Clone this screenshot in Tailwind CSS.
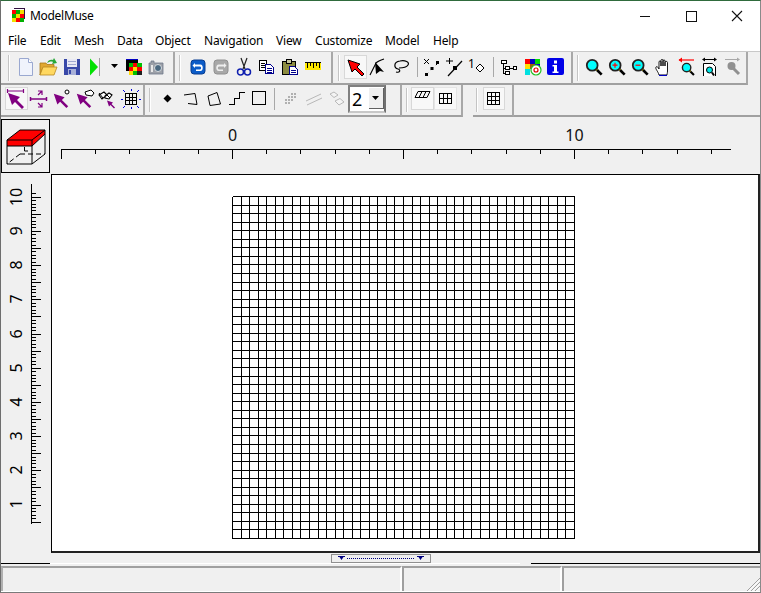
<!DOCTYPE html>
<html lang="en">
<head>
  <meta charset="UTF-8" />
  <title>ModelMuse</title>
  <script src="https://cdn.jsdelivr.net/npm/@tailwindcss/browser@4"></script>
</head>
<body class="bg-[#f0f0f0] overflow-hidden">

  <!-- shared icon parts -->
  <svg class="hidden">
    <symbol id="arrow" viewBox="0 0 20 20"><path d="M2 3 L14 7 L11 10 L18 17 L16 19 L9 12 L6 15 Z" fill="currentColor"/></symbol>
    <symbol id="lens" viewBox="0 0 20 20">
      <line x1="12" y1="12" x2="18.5" y2="18.5" stroke="#000" stroke-width="3"/>
      <line x1="11.5" y1="11.5" x2="13.5" y2="13.5" stroke="#e0d020" stroke-width="2"/>
      <circle cx="8" cy="8" r="6" fill="#00ffff" stroke="#222" stroke-width="2"/>
    </symbol>
  </svg>

  <div class="w-[761px] h-[593px] flex flex-col border-t border-t-[#2f6b3c] border-l border-l-[#6e6e6e] border-r border-r-[#8a8a8a] border-b border-b-[#7a7a7a] font-['Noto_Sans',sans-serif] text-black">

    <!-- Title bar -->
    <div class="h-[30px] bg-white flex items-center shrink-0">
      <svg class="ml-[9px] mt-[-1px]" width="16" height="15" viewBox="0 0 15 15" shape-rendering="crispEdges">
        <rect x="1" y="2" width="4" height="4" fill="#ff0000"/><rect x="5" y="2" width="4" height="4" fill="#00b000"/><rect x="9" y="2" width="4" height="4" fill="#f0e000"/>
        <rect x="1" y="6" width="4" height="4" fill="#00b000"/><rect x="5" y="6" width="4" height="4" fill="#f0e000"/><rect x="9" y="6" width="4" height="4" fill="#ff0000"/>
        <rect x="1" y="10" width="4" height="4" fill="#f0e000"/><rect x="5" y="10" width="4" height="4" fill="#ff0000"/><rect x="9" y="10" width="4" height="4" fill="#00b000"/>
        <path d="M3 0h11v11h-1V1H3z" fill="#301040"/>
      </svg>
      <span class="ml-[4px] text-[12px] leading-none tracking-[-0.3px]">ModelMuse</span>
      <div class="ml-auto flex h-full items-center">
        <svg width="46" height="30" shape-rendering="crispEdges"><rect x="18" y="15" width="10" height="1" fill="#111"/></svg>
        <svg width="46" height="30" shape-rendering="crispEdges"><rect x="18.5" y="10.5" width="10" height="10" fill="none" stroke="#111"/></svg>
        <svg width="46" height="30"><path d="M18 10 L28 20 M28 10 L18 20" stroke="#111" stroke-width="1.1"/></svg>
      </div>
    </div>

    <!-- Menu bar -->
    <div class="h-[20px] bg-white flex items-center text-[12px] leading-none shrink-0 pl-[7px] tracking-[-0.2px]">
      <span class="w-[32px]">File</span>
      <span class="w-[34px]">Edit</span>
      <span class="w-[43px]">Mesh</span>
      <span class="w-[38px]">Data</span>
      <span class="w-[49px]">Object</span>
      <span class="w-[72px]">Navigation</span>
      <span class="w-[39px]">View</span>
      <span class="w-[70px]">Customize</span>
      <span class="w-[48px]">Model</span>
      <span>Help</span>
    </div>

    <!-- Toolbar row 1 -->
    <div class="h-[34px] flex shrink-0 border-t border-t-[#c8c8c8]">
      <div class="w-[174px] flex items-center border-b-2 border-b-[#a0a0a0] border-r-2 border-r-[#a8a8a8] relative pl-[13px] pb-[2px]">
        <div class="absolute left-[7px] top-[3px] bottom-[2px] w-[2px] bg-[#c4c4c4] border-r border-white"></div>
        <div class="w-[23px] flex justify-center">
          <svg width="20" height="20" viewBox="0 0 20 20"><path d="M3.5 1.5h9l4 4v13h-13z" fill="#f0f3fc" stroke="#9aa8d0"/><path d="M12.5 1.5v4h4" fill="#ffffff" stroke="#9aa8d0"/></svg>
        </div>
        <div class="w-[23px] flex justify-center">
          <svg width="20" height="20" viewBox="0 0 20 20"><path d="M1 6h6l1 1.500h7v3H4L1 18z" fill="#e0a830" stroke="#a87818" stroke-width=".8"/><path d="M1 18l3-8h14l-3 8z" fill="#ffd860" stroke="#b88820" stroke-width=".8"/><path d="M8 6c1-3 4-4 6-3l1-2 3 5-5 1 1-2c-2-1-4 0-6 1z" fill="#28a838"/></svg>
        </div>
        <div class="w-[24px] flex justify-center">
          <svg width="20" height="20" viewBox="0 0 20 20" shape-rendering="crispEdges"><rect x="2" y="2" width="16" height="16" fill="#3848a8"/><rect x="5" y="2" width="10" height="8" fill="#e8e8f4"/><rect x="6" y="4" width="8" height="1" fill="#a0a8d0"/><rect x="6" y="7" width="8" height="1" fill="#a0a8d0"/><rect x="6" y="12" width="8" height="6" fill="#a8b0d8"/><rect x="7" y="13" width="2" height="4" fill="#3848a8"/></svg>
        </div>
        <div class="w-[22px] flex justify-center">
          <svg width="20" height="20" viewBox="0 0 20 20"><path d="M5 1.500 L13 10 L5 18.500 Z" fill="#00e000"/><rect x="14" y="1" width="1" height="18" fill="#a0a0a0"/></svg>
        </div>
        <div class="w-[17px] flex justify-center">
          <svg width="9" height="5"><path d="M1 0h7L4.500 4z" fill="#000"/></svg>
        </div>
        <div class="w-[21px] flex justify-center">
          <svg width="18" height="18" viewBox="0 0 18 18" shape-rendering="crispEdges"><rect x="1" y="1" width="12" height="4" fill="#000"/><rect x="1" y="1" width="12" height="1" fill="#0000c0"/><rect x="1" y="5" width="3" height="8" fill="#000"/><rect x="4" y="5" width="4" height="4" fill="#00c000"/><rect x="8" y="5" width="4" height="4" fill="#ff0000"/><rect x="12" y="5" width="5" height="4" fill="#00c000"/><rect x="4" y="9" width="4" height="4" fill="#ff0000"/><rect x="8" y="9" width="4" height="4" fill="#ffe000"/><rect x="12" y="9" width="5" height="4" fill="#ff0000"/><rect x="4" y="13" width="4" height="4" fill="#ffe000"/><rect x="8" y="13" width="4" height="4" fill="#00c000"/><rect x="12" y="13" width="5" height="4" fill="#202020"/></svg>
        </div>
        <div class="w-[24px] flex justify-center">
          <svg width="18" height="18" viewBox="0 0 18 18"><path d="M2 5h2V3h3v2h9v11H2z" fill="#9ca0a8" stroke="#70788a" stroke-width=".8"/><circle cx="11" cy="10" r="3.500" fill="#4a6880" stroke="#d8dce0"/><rect x="4" y="7" width="2" height="7" fill="#e8e8e8"/></svg>
        </div>
      </div>

      <div class="w-[158px] flex items-center border-b-2 border-b-[#a0a0a0] border-r-2 border-r-[#a8a8a8] relative pl-[11px] pb-[2px]">
        <div class="absolute left-[4px] top-[3px] bottom-[2px] w-[2px] bg-[#c4c4c4] border-r border-white"></div>
        <div class="w-[23px] flex justify-center">
          <svg width="18" height="18" viewBox="0 0 18 18"><rect x="2" y="2" width="14" height="14" rx="3" fill="#0c5cc8" stroke="#083c90"/><path d="M6 5 L3.500 7.500 L6 10 V8.500 H11 C12.500 8.500 12.500 11.500 11 11.500 H7 V13 H11.500 C14.500 13 14.500 6.500 11.500 6.500 H6 Z" fill="#fff"/></svg>
        </div>
        <div class="w-[23px] flex justify-center">
          <svg width="18" height="18" viewBox="0 0 18 18"><rect x="2" y="2" width="14" height="14" rx="3" fill="#a8a8a8" stroke="#909090"/><path d="M12 5 L14.500 7.500 L12 10 V8.500 H7 C5.500 8.500 5.500 11.500 7 11.500 H11 V13 H6.500 C3.500 13 3.500 6.500 6.500 6.500 H12 Z" fill="#eee"/></svg>
        </div>
        <div class="w-[23px] flex justify-center">
          <svg width="20" height="20" viewBox="0 0 20 20"><path d="M7 1 L11 12 M13 1 L9 12" stroke="#222" stroke-width="1.200"/><circle cx="6.500" cy="15" r="3" fill="none" stroke="#1020b0" stroke-width="1.500"/><circle cx="13.500" cy="15" r="3" fill="none" stroke="#1020b0" stroke-width="1.500"/></svg>
        </div>
        <div class="w-[23px] flex justify-center">
          <svg width="18" height="18" viewBox="0 0 18 18" shape-rendering="crispEdges"><path d="M1.500 2.500h7v10h-7z" fill="#fff" stroke="#000"/><path d="M3 5h4M3 7h4M3 9h4" stroke="#000"/><path d="M7.500 6.500h5l3 3v6h-8z" fill="#fff" stroke="#00008b"/><path d="M9 10h5M9 12h5M9 14h5" stroke="#00008b"/></svg>
        </div>
        <div class="w-[23px] flex justify-center">
          <svg width="18" height="18" viewBox="0 0 18 18" shape-rendering="crispEdges"><rect x="1" y="3" width="13" height="13" fill="#8c8c40" stroke="#000"/><rect x="5" y="1" width="5" height="4" fill="#c8c8a0" stroke="#000"/><path d="M8.500 8.500h5l3 3v5h-8z" fill="#fff" stroke="#00008b"/><path d="M10 12h5M10 14h5" stroke="#00008b"/></svg>
        </div>
        <div class="w-[23px] flex justify-center">
          <svg width="18" height="9" viewBox="0 0 18 9" shape-rendering="crispEdges"><rect x="1" y="0" width="16" height="8" fill="#ffe800"/><path d="M3.500 0v6M6.500 0v4M9.500 0v6M12.500 0v4M15.500 0v6" stroke="#000"/><rect x="1" y="0" width="16" height="1" fill="#000"/></svg>
        </div>
      </div>

      <div class="w-[240px] flex items-center border-b-2 border-b-[#a0a0a0] border-r-2 border-r-[#a8a8a8] relative pl-[11px] pb-[2px]">
        <div class="absolute left-[5px] top-[3px] bottom-[2px] w-[2px] bg-[#c4c4c4] border-r border-white"></div>
        <div class="w-[23px] h-[24px] flex justify-center items-center bg-[#f8f8f8] border border-[#d8d8d8]">
          <svg width="20" height="20" viewBox="0 0 20 20"><path d="M2 3 L14 7 L11 10 L18 17 L16 19 L9 12 L6 15 Z" fill="#ff0000" stroke="#000"/></svg>
        </div>
        <div class="w-[23px] flex justify-center">
          <svg width="20" height="20" viewBox="0 0 20 20"><path d="M1 18 L7 6 C9 4 12 3 15 2" fill="none" stroke="#000" stroke-width="1.100"/><path d="M6 5 L15 15 L11 14 L7 17 Z" fill="#000"/></svg>
        </div>
        <div class="w-[23px] flex justify-center">
          <svg width="20" height="20" viewBox="0 0 20 20"><path d="M4 15 C8 16 9 13 6 12 C2 11 1 5 8 4 C13 3 18 5 16 8 C14 11 10 11 7 11" fill="none" stroke="#000" stroke-width="1.200"/></svg>
        </div>
        <div class="w-[3px] h-[20px] border-l border-l-[#a8a8a8] ml-[4px]"></div>
        <div class="w-[23px] flex justify-center">
          <svg width="20" height="20" viewBox="0 0 20 20"><path d="M2 2l5 5M7 2l-5 5" stroke="#000"/><path d="M4 18 L17 5" stroke="#000" stroke-dasharray="3 4"/><rect x="8.500" y="10" width="3" height="3" fill="#000"/><rect x="3" y="16" width="3" height="3" fill="#000"/><rect x="14" y="4" width="3" height="3" fill="#000"/></svg>
        </div>
        <div class="w-[23px] flex justify-center">
          <svg width="20" height="20" viewBox="0 0 20 20"><path d="M1 4h7M4.500 1v6" stroke="#000"/><path d="M3 19 L17 4" stroke="#000" stroke-width="1.200"/><rect x="8" y="9" width="4" height="4" fill="#000"/></svg>
        </div>
        <div class="w-[23px] flex justify-center relative h-[20px]">
          <span class="text-[12px] leading-none absolute left-[2px] top-[1px]">1</span>
          <svg class="absolute left-[9px] top-[6px]" width="10" height="10"><path d="M5 1 L9 5 L5 9 L1 5 Z" fill="#fff" stroke="#000"/></svg>
        </div>
        <div class="w-[4px] h-[20px] border-l border-l-[#a8a8a8] ml-[4px]"></div>
        <div class="w-[23px] flex justify-center">
          <svg width="18" height="18" viewBox="0 0 18 18" shape-rendering="crispEdges"><path d="M1.500 2.500h5v3h-5zM5.500 8.500h4v3h-4zM5.500 13.500h4v3h-4zM13.500 8.500h3v3h-3z" fill="#fff" stroke="#000"/><path d="M3.500 5v10h2M3.500 10h2M9.500 10h4" stroke="#000" fill="none"/></svg>
        </div>
        <div class="w-[25px] flex justify-center">
          <svg width="18" height="18" viewBox="0 0 18 18"><g shape-rendering="crispEdges"><rect x="1" y="1" width="5" height="5" fill="#ff0000"/><rect x="6" y="1" width="5" height="5" fill="#0000c0"/><rect x="11" y="1" width="5" height="5" fill="#00e000"/><rect x="1" y="6" width="5" height="5" fill="#ffe000"/><rect x="6" y="6" width="5" height="5" fill="#a06000"/><rect x="11" y="6" width="5" height="5" fill="#0000c0"/><rect x="1" y="11" width="5" height="6" fill="#00e0e0"/></g><circle cx="12" cy="12" r="5" fill="#fff" stroke="#20c020" stroke-width="1.200"/><circle cx="12" cy="12" r="2" fill="none" stroke="#e00000" stroke-width="1.200"/></svg>
        </div>
        <div class="w-[21px] flex justify-center">
          <svg width="17" height="17" viewBox="0 0 17 17"><rect width="17" height="17" rx="2" fill="#0000e8"/><rect x="7" y="2.500" width="3" height="3" fill="#fff"/><path d="M5.500 7h4.500v6.500h1.500V15h-6v-1.500H7V8.500H5.500z" fill="#fff"/></svg>
        </div>
      </div>

      <div class="w-[175px] flex items-center border-b-2 border-b-[#a0a0a0] border-r-2 border-r-[#a8a8a8] relative pl-[9px] pb-[2px]">
        <div class="absolute left-[4px] top-[3px] bottom-[2px] w-[2px] bg-[#c4c4c4] border-r border-white"></div>
        <div class="w-[23px] flex justify-center"><svg width="18" height="18"><use href="#lens"/></svg></div>
        <div class="w-[23px] flex justify-center">
          <svg width="18" height="18" viewBox="0 0 18 18"><use href="#lens" width="18" height="18"/><path d="M4.500 7.200h5M7 4.700v5" stroke="#ff0000" stroke-width="1.200"/></svg>
        </div>
        <div class="w-[23px] flex justify-center">
          <svg width="18" height="18" viewBox="0 0 18 18"><use href="#lens" width="18" height="18"/><path d="M4.500 7.200h5" stroke="#ff0000" stroke-width="1.200"/></svg>
        </div>
        <div class="w-[24px] flex justify-center">
          <svg width="16" height="18" viewBox="0 0 16 18"><path d="M4 17 C3 13 0 11 1 9 C2 8 3 9 4 11 V4 C4 2.500 6 2.500 6 4 V8 V2.500 C6 1 8 1 8 2.500 V8 V3 C8 1.500 10 1.500 10 3 V8 V4.500 C10 3 12.500 3 12.500 4.500 V13 C12.500 15 12 16 12 17 Z" fill="#fff" stroke="#000" stroke-width=".9"/><path d="M4 17.500h8" stroke="#0000c0" stroke-width="1.200"/></svg>
        </div>
        <div class="w-[23px] flex justify-center">
          <svg width="20" height="20" viewBox="0 0 20 20"><path d="M2 3h15" stroke="#ff0000" stroke-width="1.200"/><path d="M5 .5L1.500 3 5 5.500z" fill="#ff0000"/><use href="#lens" x="4" y="5" width="14" height="14"/></svg>
        </div>
        <div class="w-[23px] flex justify-center">
          <svg width="20" height="20" viewBox="0 0 20 20"><path d="M3 2.500h13" stroke="#000"/><path d="M5 .5L2 2.500 5 4.500zM14 .5L17 2.500 14 4.500z" fill="#000"/><path d="M3.500 19V6.500h9l3 3V19" fill="#fff" stroke="#000"/><circle cx="9.500" cy="13" r="3" fill="#00e8e8" stroke="#000"/><path d="M12 15.500l2 3" stroke="#000" stroke-width="2"/></svg>
        </div>
        <div class="w-[23px] flex justify-center">
          <svg width="20" height="20" viewBox="0 0 20 20"><path d="M2 2.500h14" stroke="#a8a8a8"/><path d="M14 .5L17 2.500 14 4.500z" fill="#a8a8a8"/><circle cx="8.500" cy="9" r="4" fill="#909090"/><path d="M10 11l6 6" stroke="#909090" stroke-width="3"/></svg>
        </div>
      </div>
    </div>

    <!-- Toolbar row 2 -->
    <div class="h-[32px] flex shrink-0">
      <div class="w-[144px] flex items-center border-b-2 border-b-[#a0a0a0] border-r-2 border-r-[#a8a8a8] pl-[4px] pb-[3px]">
        <div class="w-[23px] h-[23px] flex justify-center items-center bg-[#f8f8f8] border border-[#d8d8d8]">
          <svg width="20" height="20" viewBox="0 0 20 20" class="text-[#800080]"><use href="#arrow" y="1" width="20" height="20"/><path d="M1 2h17M1.500 0v4M17.500 0v4" stroke="currentColor" stroke-width="1.200"/></svg>
        </div>
        <div class="w-[23px] flex justify-center">
          <svg width="20" height="20" viewBox="0 0 20 20" fill="none" stroke="#800080" stroke-width="1.200"><path d="M1 10h17M1.500 8v4M17.500 8v4" stroke-width="1.500"/><path d="M9 2h4v4M13 2L9 6M9 18h4v-4M13 18L9 14"/></svg>
        </div>
        <div class="w-[23px] flex justify-center">
          <svg width="20" height="20" viewBox="0 0 20 20" class="text-[#800080]"><use href="#arrow" y="2" width="18" height="18"/><circle cx="15" cy="3" r="2" fill="#fff" stroke="#000"/></svg>
        </div>
        <div class="w-[23px] flex justify-center">
          <svg width="20" height="20" viewBox="0 0 20 20" class="text-[#800080]"><use href="#arrow" y="2" width="18" height="18"/><path d="M10 3l6-2 3 3-2 3-6-1z" fill="#fff" stroke="#000"/></svg>
        </div>
        <div class="w-[22px] flex justify-center">
          <svg width="20" height="20" viewBox="0 0 20 20" class="text-[#800080]"><path d="M2 6l5-3 3 3-5 4zM8 7l4-3 3 2-3 4-4-1z" fill="#fff" stroke="#000" stroke-width="1.100"/><path d="M2 4l4 5M9 5l4 4" stroke="#000"/><use href="#arrow" x="9" y="10" width="10" height="10"/></svg>
        </div>
        <div class="w-[25px] flex justify-center">
          <svg width="20" height="20" viewBox="0 0 20 20" shape-rendering="crispEdges"><path d="M4.500 4.500h11v11h-11zM8.500 4.500v11M11.500 4.500v11M4.500 8.500h11M4.500 11.500h11" fill="none" stroke="#000"/><path d="M2 1l2 2M18 1l-2 2M2 19l2-2M18 19l-2-2M10 0v2M10 18v2M0 10h2M18 10h2" stroke="#0000e0"/></svg>
        </div>
      </div>

      <div class="w-[257px] flex items-center border-b-2 border-b-[#a0a0a0] border-r-2 border-r-[#a8a8a8] relative pl-[11px] pb-[3px]">
        <div class="absolute left-[4px] top-[3px] bottom-[3px] w-[2px] bg-[#c4c4c4] border-r border-white"></div>
        <div class="w-[23px] flex justify-center">
          <svg width="9" height="9"><path d="M4.500 .5L8.500 4.500 4.500 8.500 .5 4.500z" fill="#000"/></svg>
        </div>
        <div class="w-[23px] flex justify-center">
          <svg width="16" height="16" viewBox="0 0 16 16" fill="none" stroke="#000"><path d="M1 4L12 2.500 14 13.500 5 12.500"/></svg>
        </div>
        <div class="w-[23px] flex justify-center">
          <svg width="16" height="16" viewBox="0 0 16 16" fill="none" stroke="#000"><path d="M2 5L11 1.500 14.500 13 4 14.500z"/></svg>
        </div>
        <div class="w-[23px] flex justify-center">
          <svg width="16" height="16" viewBox="0 0 16 16" fill="none" stroke="#000" shape-rendering="crispEdges"><path d="M0 13.500h5.500v-6h5v-6h5"/></svg>
        </div>
        <div class="w-[23px] flex justify-center">
          <svg width="15" height="15" fill="none" stroke="#000" shape-rendering="crispEdges"><rect x=".5" y=".5" width="13" height="13"/></svg>
        </div>
        <div class="w-[5px] h-[22px] border-l border-l-[#a8a8a8] ml-[3px]"></div>
        <div class="w-[23px] flex justify-center">
          <svg width="14" height="14" fill="#b0b0b0" shape-rendering="crispEdges"><path d="M7 1h2v2H7zM10 1h2v2h-2zM4 4h2v2H4zM7 4h2v2H7zM10 4h2v2h-2zM1 7h2v2H1zM4 7h2v2H4zM7 7h2v2H7zM4 10h2v2H4zM1 10h2v2H1z"/></svg>
        </div>
        <div class="w-[23px] flex justify-center">
          <svg width="18" height="16" viewBox="0 0 18 16" stroke="#b8b8b8" fill="none"><path d="M1 10L16 3M2 14L17 7"/></svg>
        </div>
        <div class="w-[23px] flex justify-center">
          <svg width="16" height="16" viewBox="0 0 16 16" stroke="#b8b8b8" fill="#f4f4f4"><path d="M1 3L5 1 9 4 5 6.500zM6 10L11 7.500 15 11 10 14z"/></svg>
        </div>
        <div class="w-[38px] h-[28px] flex border-2 border-t-[#808080] border-l-[#808080] border-b-[#c8c8c8] border-r-[#707070] bg-white items-center">
          <span class="w-[20px] pl-[2px] text-[18px] leading-none">2</span>
          <div class="h-[21px] w-[16px] bg-[#efefef] border-r border-b border-[#606060] flex items-center justify-center">
            <svg width="9" height="5"><path d="M1 0h7L4.500 4z" fill="#000"/></svg>
          </div>
        </div>
      </div>

      <div class="w-[61px] flex items-center border-b-2 border-b-[#a0a0a0] border-r-2 border-r-[#a8a8a8] relative pl-[9px] pb-[3px]">
        <div class="absolute left-[4px] top-[3px] bottom-[3px] w-[2px] bg-[#c4c4c4] border-r border-white"></div>
        <div class="w-[23px] h-[23px] flex justify-center bg-[#f8f8f8] border border-[#d8d8d8] items-start pt-[3px]">
          <svg width="17" height="8" viewBox="0 0 17 8" fill="none" stroke="#000"><path d="M4 .5h12l-3 6H1zM8 .5l-3 6M12 .5l-3 6"/></svg>
        </div>
        <div class="w-[23px] h-[23px] flex justify-center items-center bg-[#f8f8f8] border border-[#e4e4e4]">
          <svg width="14" height="12" fill="none" stroke="#000" shape-rendering="crispEdges"><path d="M.5 .5h12v10H.5zM.5 5.500h12M4.500 .5v10M8.500 .5v10"/></svg>
        </div>
      </div>

      <div class="w-[41px] flex items-center border-b-2 border-b-[#a0a0a0] border-r-2 border-r-[#a8a8a8] relative pl-[10px] pb-[3px] ml-[10px] shrink-0">
        <div class="absolute left-[3px] top-[3px] bottom-[3px] w-[2px] bg-[#c4c4c4] border-r border-white"></div>
        <div class="w-[22px] h-[23px] flex justify-center items-center bg-[#f8f8f8] border border-[#d8d8d8]">
          <svg width="14" height="14" fill="none" stroke="#000" shape-rendering="crispEdges"><path d="M.5 .5h12v12H.5zM.5 4.500h12M.5 8.500h12M4.500 .5v12M8.500 .5v12"/></svg>
        </div>
      </div>
      <div class="flex-1 border-b-2 border-b-[#a0a0a0]"></div>
    </div>

    <!-- Top ruler row -->
    <div class="h-[57px] flex shrink-0">
      <div class="w-[49px] h-[54px] mt-[2px] border border-black flex items-center justify-center shrink-0">
        <svg width="40" height="40" viewBox="0 0 40 40">
          <path d="M1 14 L14 4 H39 V8 L26 20 H1 Z" fill="#ff0000"/>
          <path d="M1 14 L14 4 H39 V28 L26 38 H1 Z M1 14 H26 L39 4 M26 14 V38 M1 20 H26 L39 8" fill="none" stroke="#000"/>
          <path d="M14 28 L1 38 M14 28 H39" stroke="#000" stroke-dasharray="5 3" fill="none"/>
          <path d="M18.500 21 V25 H22" stroke="#000" fill="none"/>
        </svg>
      </div>
      <svg id="topRuler" width="710" height="57" class="shrink-0" shape-rendering="crispEdges">
        <text x="182.500" y="24" font-size="16" text-anchor="middle" fill="#111" shape-rendering="auto">0</text>
        <text x="524.500" y="24" font-size="16" text-anchor="middle" fill="#111" shape-rendering="auto">10</text>
      </svg>
    </div>

    <!-- Ruler + drawing area -->
    <div class="h-[379px] flex shrink-0">
      <div class="w-[50px] shrink-0 relative">
        <svg id="leftRuler" width="50" height="378" shape-rendering="crispEdges"></svg>
        <span class="absolute left-[5px] top-[13px] w-[20px] text-[16px] leading-[20px] text-center -rotate-90">10</span>
        <span class="absolute left-[5px] top-[47px] w-[20px] text-[16px] leading-[20px] text-center -rotate-90">9</span>
        <span class="absolute left-[5px] top-[81px] w-[20px] text-[16px] leading-[20px] text-center -rotate-90">8</span>
        <span class="absolute left-[5px] top-[115px] w-[20px] text-[16px] leading-[20px] text-center -rotate-90">7</span>
        <span class="absolute left-[5px] top-[150px] w-[20px] text-[16px] leading-[20px] text-center -rotate-90">6</span>
        <span class="absolute left-[5px] top-[184px] w-[20px] text-[16px] leading-[20px] text-center -rotate-90">5</span>
        <span class="absolute left-[5px] top-[218px] w-[20px] text-[16px] leading-[20px] text-center -rotate-90">4</span>
        <span class="absolute left-[5px] top-[252px] w-[20px] text-[16px] leading-[20px] text-center -rotate-90">3</span>
        <span class="absolute left-[5px] top-[286px] w-[20px] text-[16px] leading-[20px] text-center -rotate-90">2</span>
        <span class="absolute left-[5px] top-[320px] w-[20px] text-[16px] leading-[20px] text-center -rotate-90">1</span>
      </div>
      <div class="w-[709px] bg-white border-t border-l border-black border-b-2 border-r-2 border-b-[#222] border-r-[#222] shrink-0">
        <svg id="grid" width="700" height="370" shape-rendering="crispEdges"></svg>
      </div>
    </div>

    <!-- Splitter -->
    <div class="h-[10px] flex justify-center items-center shrink-0 relative">
      <div class="w-[100px] h-[9px] border border-[#909090] flex items-center justify-between px-[6px]">
        <svg width="7" height="5"><path d="M0 0h7v1H5.500L3.500 4 1.500 1H0z" fill="#000080"/></svg>
        <div class="w-[67px] border-t border-dotted border-[#000080]"></div>
        <svg width="7" height="5"><path d="M0 0h7v1H5.500L3.500 4 1.500 1H0z" fill="#000080"/></svg>
      </div>
    </div>
    <div class="h-[3px] flex shrink-0">
      <div class="w-[49px] h-[1px] bg-black"></div>
      <div class="w-[470px] h-[1px] bg-white"></div>
      <div class="w-[11px] h-[1px]"></div>
      <div class="flex-1 h-[1px] bg-black"></div>
    </div>

    <!-- Status bar -->
    <div class="flex-1 flex border-b border-b-white">
      <div class="w-[401px] border-t-2 border-l-2 border-t-[#a0a0a0] border-l-[#b0b0b0] border-r-2 border-r-white"></div>
      <div class="w-[160px] border-t-2 border-l-2 border-t-[#a0a0a0] border-l-[#a0a0a0] border-r-2 border-r-white"></div>
      <div class="flex-1 border-t-2 border-l-2 border-t-[#a0a0a0] border-l-[#a0a0a0] relative">
        <svg class="absolute right-0 bottom-0" width="14" height="14" fill="none" stroke-width="1">
          <path d="M14 1L1 14M14 5L5 14M14 9L9 14" stroke="#a0a0a0"/>
          <path d="M14 2.500L2.500 14M14 6.500L6.500 14M14 10.500L10.500 14" stroke="#fff"/>
        </svg>
      </div>
    </div>
  </div>

  <script>
    // rulers and mesh are drawn from the model coordinates
    const NS = 'http://www.w3.org/2000/svg';
    function line(svg, x1, y1, x2, y2) {
      const l = document.createElementNS(NS, 'line');
      l.setAttribute('x1', x1); l.setAttribute('y1', y1);
      l.setAttribute('x2', x2); l.setAttribute('y2', y2);
      l.setAttribute('stroke', '#000');
      svg.appendChild(l);
    }

    const unit = 34.2;

    // top ruler: page x = svg x + 50, page y = svg y + 117
    const top_ = document.getElementById('topRuler');
    line(top_, 11, 32.5, 681, 32.5);
    for (let i = 0; i <= 19; i++) {
      const x = Math.round(11 + i * unit) + 0.5;
      line(top_, x, 32, x, (i % 5 === 0) ? 42 : 37);
    }

    // left ruler: page x = svg x + 1, page y = svg y + 174
    const left_ = document.getElementById('leftRuler');
    line(left_, 30.5, 10, 30.5, 350);
    for (let i = 0; i <= 96; i++) {
      const y = Math.round(350 - 2.4 - i * 3.42) + 0.5;
      line(left_, 30, y, (i % 5 === 0) ? 40 : 35, y);
    }

    // 40 x 40 mesh: page x = svg x + 52, page y = svg y + 175
    const grid = document.getElementById('grid');
    for (let i = 0; i <= 40; i++) {
      const p = i * 8.55;
      const x = Math.round(180 + p) + 0.5;
      const y = Math.round(21 + p) + 0.5;
      line(grid, x, 21.5, x, 363.5);
      line(grid, 180.5, y, 522.5, y);
    }
  </script>
</body>
</html>
